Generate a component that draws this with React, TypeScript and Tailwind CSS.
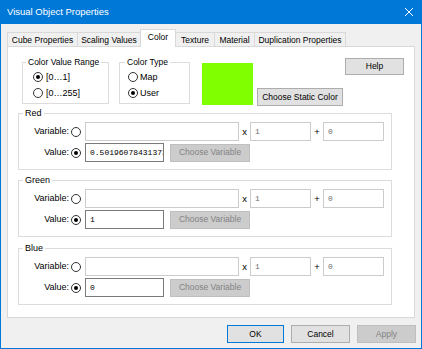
import React from "react";

const font = "font-['Liberation_Sans',Arial,sans-serif]";
const mono = "font-['Liberation_Mono','Courier_New',monospace]";

const Radio = ({ on }: { on?: boolean }) => (
  <span className="flex h-[10px] w-[10px] shrink-0 items-center justify-center rounded-full border border-[#333] bg-white">
    {on && <span className="h-[4px] w-[4px] rounded-full bg-black" />}
  </span>
);

const Btn = ({
  children,
  w,
  disabled,
  focus,
  h = "h-[18px]",
}: {
  children: React.ReactNode;
  w: string;
  disabled?: boolean;
  focus?: boolean;
  h?: string;
}) => (
  <div
    className={`${w} ${h} flex shrink-0 items-center justify-center border text-[8.5px] leading-none ${
      disabled
        ? "border-[#bfbfbf] bg-[#cccccc] text-[#838383]"
        : focus
        ? "border-[#0078d7] bg-[#e1e1e1] text-black"
        : "border-[#adadad] bg-[#e1e1e1] text-black"
    }`}
  >
    {children}
  </div>
);

const Field = ({
  w,
  value,
  disabled,
}: {
  w: string;
  value: string;
  disabled?: boolean;
}) => (
  <div
    className={`${w} flex h-[19px] shrink-0 items-center overflow-hidden whitespace-nowrap border bg-white pl-[4px] ${mono} text-[8px] leading-none ${
      disabled ? "border-[#cccccc] text-[#6d6d6d]" : "border-[#7a7a7a] text-black"
    }`}
  >
    {value}
  </div>
);

const Channel = ({
  name,
  value,
  mt,
}: {
  name: string;
  value: string;
  mt: string;
}) => (
  <div className={`relative ${mt} ml-[10px] h-[57px] w-[374px] border border-[#dcdcdc] px-0 pt-[8px]`}>
    <span className="absolute -top-[6px] left-[4px] bg-white px-[2px] text-[9px] leading-[10px] text-black">
      {name}
    </span>
    <div className="flex h-[19px] items-center">
      <span className="w-[50px] text-right text-[9px] leading-none">Variable:</span>
      <span className="ml-[2px]">
        <Radio />
      </span>
      <span className="ml-[4px]">
        <Field w="w-[154px]" value="" disabled />
      </span>
      <span className="w-[11px] text-center text-[9.5px] leading-none">x</span>
      <Field w="w-[61px]" value="1" disabled />
      <span className="w-[12px] text-center text-[9.5px] leading-none">+</span>
      <Field w="w-[61px]" value="0" disabled />
    </div>
    <div className="mt-[2px] flex h-[19px] items-center">
      <span className="w-[50px] text-right text-[9px] leading-none">Value:</span>
      <span className="ml-[2px]">
        <Radio on />
      </span>
      <span className="ml-[4px]">
        <Field w="w-[79px]" value={value} />
      </span>
      <span className="ml-[6px]">
        <Btn w="w-[80px]" h="h-[18px]" disabled>
          Choose Variable
        </Btn>
      </span>
    </div>
  </div>
);

const tabs = [
  { name: "Cube Properties", w: "w-[71px]" },
  { name: "Scaling Values", w: "w-[64px]" },
  { name: "Color", w: "w-[36px]", on: true },
  { name: "Texture", w: "w-[40px]" },
  { name: "Material", w: "w-[41px]" },
  { name: "Duplication Properties", w: "w-[92px]" },
];

export default function App() {
  return (
    <div className={`flex h-[349px] w-[422px] flex-col bg-[#0078d7] ${font} text-black`}>
      {/* title bar */}
      <div className="flex h-[24px] shrink-0 items-center justify-between pl-[7px] pr-[8px] text-white">
        <span className="text-[9.5px] leading-none">Visual Object Properties</span>
        <svg width="10" height="10" viewBox="0 0 10 10">
          <path d="M1 1 L9 9 M9 1 L1 9" stroke="white" strokeWidth="1" />
        </svg>
      </div>

      <div className="mx-[1px] mb-[1px] flex flex-1 flex-col bg-[#f0f0f0] pl-[6px] pt-[5px]">
        {/* tabs */}
        <div className="flex h-[18px] items-end">
          {tabs.map((t, i) => (
            <div
              key={t.name}
              className={`${t.w} ${i > 0 ? "-ml-px" : ""} flex items-center justify-center border border-b-0 border-[#d9d9d9] text-[8.5px] leading-none ${
                t.on ? "relative z-10 h-[18px] bg-white pb-[2px]" : "h-[15px] bg-[#f0f0f0]"
              }`}
            >
              {t.name}
            </div>
          ))}
        </div>

        {/* tab panel */}
        <div className="-mt-px h-[272px] w-[408px] border border-[#d9d9d9] bg-white pt-[11px]">
          <div className="flex h-[55px] items-start pl-[14px]">
            <div className="relative mt-[4px] h-[42px] w-[87px] border border-[#dcdcdc] pl-[10px] pt-[9px]">
              <span className="absolute -top-[6px] left-[3px] bg-white px-[2px] text-[8.5px] leading-[10px]">
                Color Value Range
              </span>
              <div className="flex h-[10px] items-center gap-[3px] text-[9px] leading-none">
                <Radio on />
                <span>[0…1]</span>
              </div>
              <div className="mt-[6px] flex h-[10px] items-center gap-[3px] text-[9px] leading-none">
                <Radio />
                <span>[0…255]</span>
              </div>
            </div>
            <div className="relative ml-[10px] mt-[4px] h-[42px] w-[71px] border border-[#dcdcdc] pl-[8px] pt-[9px]">
              <span className="absolute -top-[6px] left-[5px] bg-white px-[2px] text-[8.5px] leading-[10px]">
                Color Type
              </span>
              <div className="flex h-[10px] items-center gap-[2px] text-[9px] leading-none">
                <Radio />
                <span>Map</span>
              </div>
              <div className="mt-[6px] flex h-[10px] items-center gap-[2px] text-[9px] leading-none">
                <Radio on />
                <span>User</span>
              </div>
            </div>
            <div className="ml-[12px] mt-[5px] h-[42px] w-[51px] bg-[#80ff00]" />
            <div className="ml-[4px] mt-[30px]">
              <Btn w="w-[86px]">Choose Static Color</Btn>
            </div>
            <div className="ml-[2px]">
              <Btn w="w-[59px]" h="h-[17px]">
                Help
              </Btn>
            </div>
          </div>

          <Channel name="Red" value="0.50196078431373" mt="mt-0" />
          <Channel name="Green" value="1" mt="mt-[10px]" />
          <Channel name="Blue" value="0" mt="mt-[11px]" />
        </div>

        {/* dialog buttons */}
        <div className="mt-[7px] flex justify-end gap-[7px] pr-[5px]">
          <Btn w="w-[57px]" focus>
            OK
          </Btn>
          <Btn w="w-[59px]">Cancel</Btn>
          <Btn w="w-[59px]" disabled>
            Apply
          </Btn>
        </div>
      </div>
    </div>
  );
}
